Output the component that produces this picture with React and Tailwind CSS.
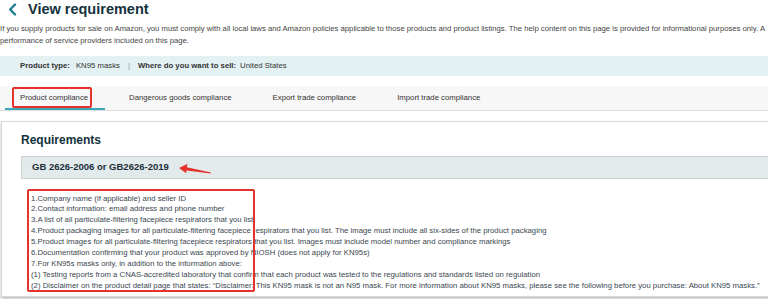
import React from "react";

const lines = [
  "1.Company name (if applicable) and seller ID",
  "2.Contact information: email address and phone number",
  "3.A list of all particulate-filtering facepiece respirators that you list",
  "4.Product packaging images for all particulate-filtering facepiece respirators that you list. The image must include all six-sides of the product packaging",
  "5.Product images for all particulate-filtering facepiece respirators that you list. Images must include model number and compliance markings",
  "6.Documentation confirming that your product was approved by NIOSH (does not apply for KN95s)",
  "7.For KN95s masks only, in addition to the information above:",
  "(1) Testing reports from a CNAS-accredited laboratory that confirm that each product was tested to the regulations and standards listed on regulation",
  "(2) Disclaimer on the product detail page that states: \u201CDisclaimer: This KN95 mask is not an N95 mask. For more information about KN95 masks, please see the following before you purchase: About KN95 masks.\u201D",
];

export default function App() {
  return (
    <div className="w-[768px] h-[299px] overflow-hidden bg-white font-['Liberation_Sans',Arial,sans-serif] text-[#3a4750]">
      {/* Title */}
      <div className="flex items-center h-[19px] pl-[8px] gap-[11px]">
        <svg width="9" height="13" viewBox="0 0 9 13" className="shrink-0">
          <path d="M7 1.5 L2.2 6.5 L7 11.5" fill="none" stroke="#1f7d8f" strokeWidth="2.4" strokeLinecap="round" strokeLinejoin="round" />
        </svg>
        <h1 className="text-[14.5px] font-bold text-[#14323c] leading-[19px]">View requirement</h1>
      </div>

      {/* Description */}
      <p className="mt-[4px] text-[7.7px] leading-[12px] whitespace-nowrap text-[#444]">
        If you supply products for sale on Amazon, you must comply with all local laws and Amazon policies applicable to those products and product listings. The help content on this page is provided for informational purposes only. A
        <br />
        performance of service providers included on this page.
      </p>

      {/* Info bar */}
      <div className="mt-[9px] h-[20px] bg-[#e4f1f3] flex items-center pl-[20px] text-[7.75px] text-[#333] whitespace-nowrap">
        <span className="font-bold">Product type:</span>
        <span className="ml-[6px]">KN95 masks</span>
        <span className="mx-[8px] text-[#999]">|</span>
        <span className="font-bold">Where do you want to sell:</span>
        <span className="ml-[4px]">United States</span>
      </div>

      {/* Tabs */}
      <div className="mt-[10px] h-[25px] bg-[#f7f7f7] border-b border-[#dcdcdc] flex items-stretch pl-[4px] gap-[9px] text-[7.75px] text-[#333] whitespace-nowrap">
        <div className="relative flex items-center px-[16px]">
          <span>Product compliance</span>
          <div className="absolute left-[8px] top-[1px] w-[80px] h-[21px] border-2 border-[#e5322d] rounded-[2px]" />
          <div className="absolute left-[1px] right-[-1px] bottom-0 h-[2px] bg-[#3aa7b9]" />
        </div>
        <div className="flex items-center px-[16px]">Dangerous goods compliance</div>
        <div className="flex items-center px-[16px]">Export trade compliance</div>
        <div className="flex items-center px-[16px]">Import trade compliance</div>
      </div>

      {/* Panel */}
      <div className="mt-[10px] ml-[1px] w-[800px] border border-[#d5d9d9] shadow-[0_2px_3px_rgba(0,0,0,0.25)] pl-[19px] pt-[10px] pb-[4px]">
        <h2 className="text-[12px] font-bold leading-[16px] text-[#14323c]">Requirements</h2>
        <div className="relative mt-[8px] h-[23px] bg-[#e3eaec] border border-[#c9d3d5] flex items-center pl-[10px]">
          <span className="text-[9.5px] font-bold text-[#1b2f38]">GB 2626-2006 or GB2626-2019</span>
          <svg className="absolute left-[155px] top-[5px]" width="36" height="14" viewBox="0 0 36 14">
            <path d="M2 6 L10.5 1.8 L9.8 5.2 L34 10.4 L33.6 11.6 L9.4 8.4 L9.2 11.2 Z" fill="#e5322d" />
          </svg>
        </div>
        <div className="relative mt-[10px] pt-[4.5px] pl-[10px] text-[7.75px] leading-[10.9px] whitespace-nowrap text-[#3a4750]">
          {lines.map((l, i) => (
            <div key={i}>{l}</div>
          ))}
          <div className="absolute left-[6px] top-0 w-[228px] h-[103px] border-2 border-[#e5322d] rounded-[2px]" />
        </div>
      </div>
    </div>
  );
}
